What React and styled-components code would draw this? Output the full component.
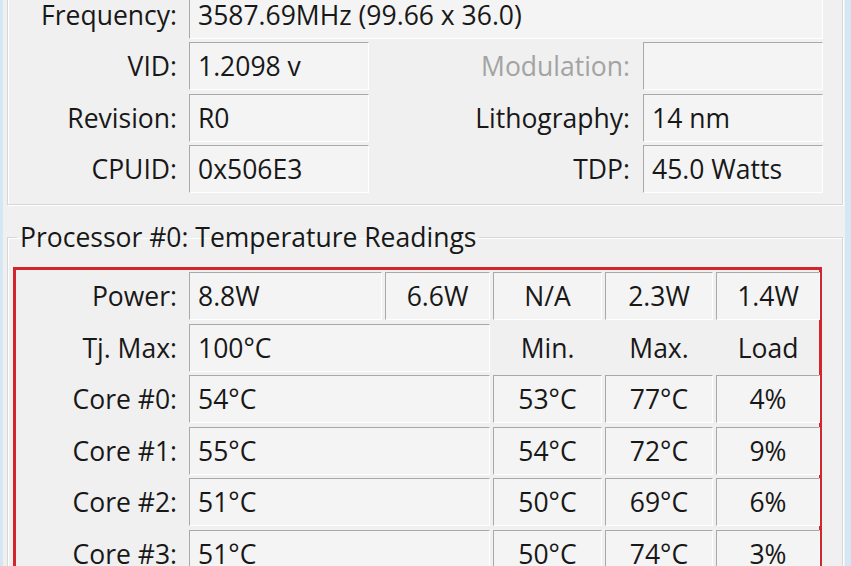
import React from "react";
import styled, { createGlobalStyle } from "styled-components";

const GlobalStyle = createGlobalStyle`
  html, body {
    margin: 0;
    padding: 0;
  }
  body {
    font-family: "Open Sans", "Noto Sans", sans-serif;
    color: #1b1b1b;
  }
`;

const Frame = styled.div`
  width: 851px;
  height: 566px;
  overflow: hidden;
  box-sizing: border-box;
  background: #d3e7f5;
  padding: 0 6px 0 3px;
`;

const Window = styled.div`
  display: flow-root;
  height: 100%;
  box-sizing: border-box;
  background: #f0f0f0;
  padding: 0 2px 0 4px;
`;

const InfoGroup = styled.div`
  margin-top: -30px;
  padding: 19.5px 0 11px 0;
  border: 1px solid #d7d7d7;
  box-shadow: inset 1px 1px 0 #fff, 1px 1px 0 #fff;
  display: grid;
  grid-template-columns: 181px 180px 274px 180px;
  grid-auto-rows: 48px;
  row-gap: 3.5px;
`;

const Label = styled.div`
  display: flex;
  align-items: center;
  justify-content: flex-end;
  padding-right: ${(p) => p.$pad || 12}px;
  font-size: 26.5px;
  white-space: nowrap;
  color: ${(p) => (p.$muted ? "#a3a3a3" : "#181818")};
`;

const Field = styled.div`
  display: flex;
  align-items: center;
  justify-content: ${(p) => (p.$center ? "center" : "flex-start")};
  padding-left: ${(p) => (p.$center ? 0 : 8)}px;
  grid-column: ${(p) => p.$span || "auto"};
  border-top: 1px solid #a9a9a9;
  border-left: 1px solid #a9a9a9;
  border-bottom: 1px solid #fff;
  border-right: 1px solid #fff;
  background: #f4f4f4;
  font-size: 26.5px;
  color: #181818;
  white-space: nowrap;
`;

const Heading = styled.div`
  display: flex;
  align-items: center;
  justify-content: center;
  font-size: 26.5px;
  color: #181818;
`;

const TempGroup = styled.fieldset`
  margin: 17px 0 0 0;
  padding: 0 20px 0 5px;
  border: 1px solid #d7d7d7;
  box-shadow: inset 1px 1px 0 #fff, 1px 1px 0 #fff;
  min-width: 0;
`;

const Legend = styled.legend`
  margin-left: 4px;
  padding: 0 3px;
  font-size: 26.5px;
  line-height: 30px;
  color: #181818;
`;

const Highlight = styled.div`
  margin-top: 15px;
  border: 3px solid #d3262c;
  padding-top: 2px;
  display: grid;
  grid-template-columns: 170px 193px 105px 109px 108px 104px;
  grid-auto-rows: 48px;
  column-gap: 3px;
  row-gap: 3.6px;
`;

const cores = [
  { name: "Core #0:", temp: "54°C", min: "53°C", max: "77°C", load: "4%" },
  { name: "Core #1:", temp: "55°C", min: "54°C", max: "72°C", load: "9%" },
  { name: "Core #2:", temp: "51°C", min: "50°C", max: "69°C", load: "6%" },
  { name: "Core #3:", temp: "51°C", min: "50°C", max: "74°C", load: "3%" },
];

export default function App() {
  return (
    <Frame>
      <GlobalStyle />
      <Window>
        <InfoGroup>
          <Label>Frequency:</Label>
          <Field $span="2 / -1">3587.69MHz (99.66 x 36.0)</Field>

          <Label>VID:</Label>
          <Field>1.2098 v</Field>
          <Label $pad={13} $muted>
            Modulation:
          </Label>
          <Field />

          <Label>Revision:</Label>
          <Field>R0</Field>
          <Label $pad={13}>Lithography:</Label>
          <Field>14 nm</Field>

          <Label>CPUID:</Label>
          <Field>0x506E3</Field>
          <Label $pad={13}>TDP:</Label>
          <Field>45.0 Watts</Field>
        </InfoGroup>

        <TempGroup>
          <Legend>Processor #0: Temperature Readings</Legend>
          <Highlight>
            <Label $pad={9}>Power:</Label>
            <Field>8.8W</Field>
            <Field $center>6.6W</Field>
            <Field $center>N/A</Field>
            <Field $center>2.3W</Field>
            <Field $center>1.4W</Field>

            <Label $pad={9}>Tj. Max:</Label>
            <Field $span="span 2">100°C</Field>
            <Heading>Min.</Heading>
            <Heading>Max.</Heading>
            <Heading>Load</Heading>

            {cores.map((c) => (
              <React.Fragment key={c.name}>
                <Label $pad={9}>{c.name}</Label>
                <Field $span="span 2">{c.temp}</Field>
                <Field $center>{c.min}</Field>
                <Field $center>{c.max}</Field>
                <Field $center>{c.load}</Field>
              </React.Fragment>
            ))}
          </Highlight>
        </TempGroup>
      </Window>
    </Frame>
  );
}
